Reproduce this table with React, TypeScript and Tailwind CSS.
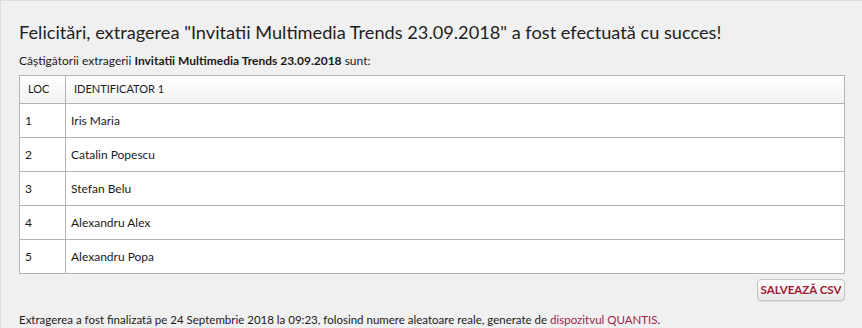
import React from "react";

const rows = [
  ["1", "Iris Maria"],
  ["2", "Catalin Popescu"],
  ["3", "Stefan Belu"],
  ["4", "Alexandru Alex"],
  ["5", "Alexandru Popa"],
];

export default function App() {
  return (
    <div
      className="w-[862px] h-[328px] overflow-hidden bg-[#f0f0f0] border-l border-t border-[#dcdcdc] text-[#1a1a1a]"
      style={{ fontFamily: "Lato, 'Open Sans', sans-serif" }}
    >
      <div className="pl-[18px] pr-[16px]">
        <h1 className="text-[18.2px] leading-[24px] pt-[19px] text-[#1e1e1e]">
          Felicitări, extragerea "Invitatii Multimedia Trends 23.09.2018" a fost efectuată cu succes!
        </h1>
        <p className="text-[12px] leading-[16px] mt-[9px]">
          Câștigătorii extragerii <b className="font-bold">Invitatii Multimedia Trends 23.09.2018</b> sunt:
        </p>
        <table className="mt-[6px] w-[826px] border-collapse border border-[#b4b4b4] text-[12px] bg-white">
          <thead>
            <tr className="h-[28px] bg-gradient-to-b from-white to-[#f2f2f2]">
              <th className="w-[46px] border border-[#b4b4b4] text-left font-normal pl-[8px] text-[11px]">LOC</th>
              <th className="border border-[#b4b4b4] text-left font-normal pl-[8px] text-[11px]">IDENTIFICATOR 1</th>
            </tr>
          </thead>
          <tbody>
            {rows.map(([n, name]) => (
              <tr key={n} className="h-[34px]">
                <td className="border border-[#b4b4b4] pl-[5px]">{n}</td>
                <td className="border border-[#b4b4b4] pl-[5px]">{name}</td>
              </tr>
            ))}
          </tbody>
        </table>
        <div className="flex justify-end w-[826px] mt-[5px]">
          <button className="h-[22px] w-[88px] rounded-[4px] border border-[#c4c4c4] bg-gradient-to-b from-white to-[#e6e6e6] text-[11.5px] font-bold text-[#a11a33] leading-none shadow-[0_1px_1px_rgba(0,0,0,0.08)] whitespace-nowrap">
            SALVEAZĂ CSV
          </button>
        </div>
        <p className="text-[11.5px] leading-[15px] mt-[11px] whitespace-nowrap">
          Extragerea a fost finalizată pe 24 Septembrie 2018 la 09:23, folosind numere aleatoare reale, generate de{" "}
          <span className="text-[#a3224a]">dispozitvul QUANTIS</span>.
        </p>
      </div>
    </div>
  );
}
